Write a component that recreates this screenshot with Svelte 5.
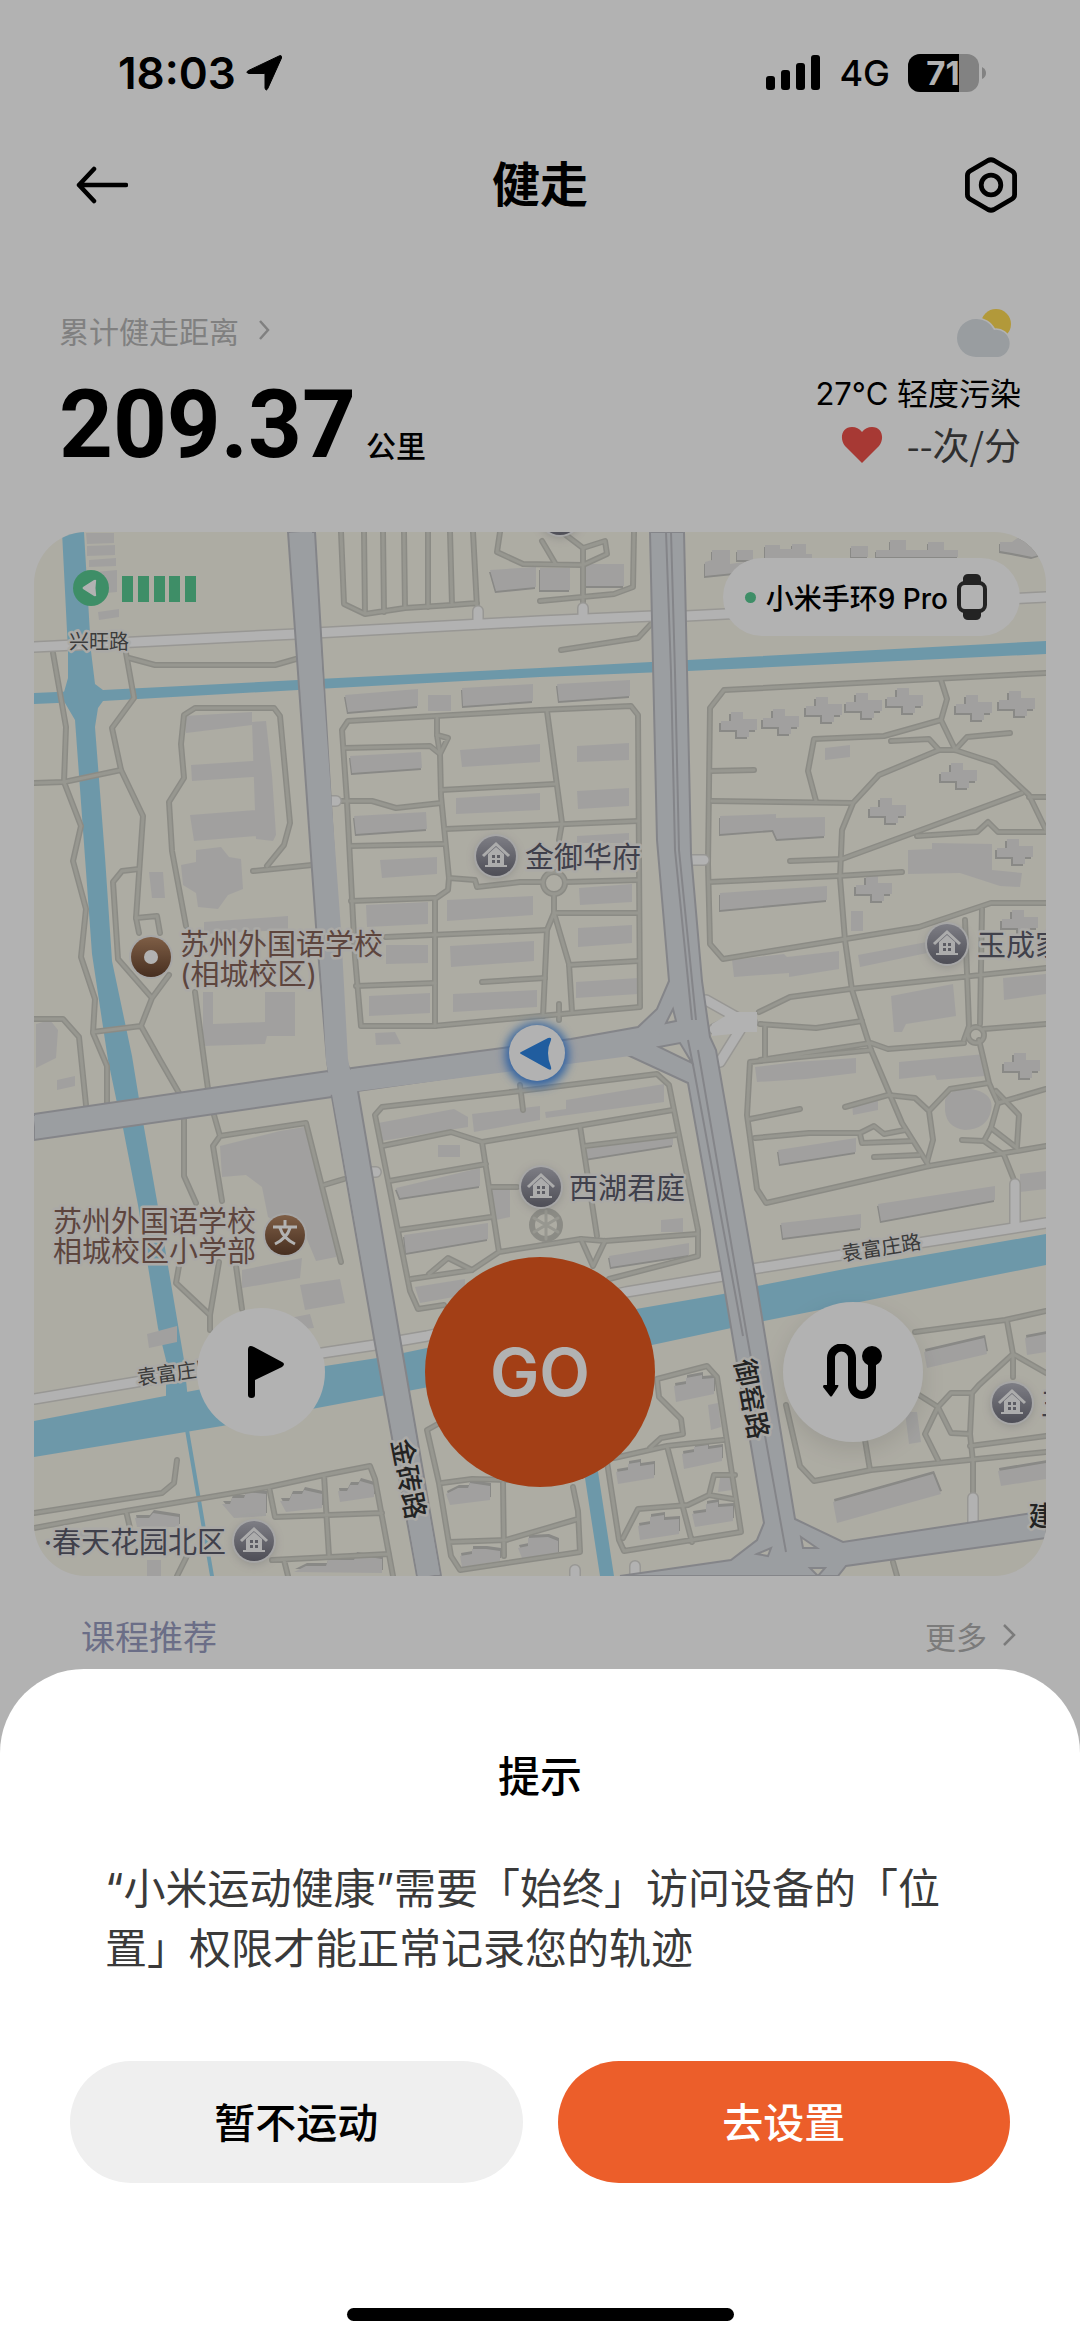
<script lang="ts">
    let sheetOpen = true;

    const closeSheet = () => {
        sheetOpen = false;
    };

    const steps = [122, 138, 154, 169, 185];

    // Footpaths and estate roads
    const lanes = [
        'M53 653L66 727 64 782 81 826 73 861 86 909 81 957 95 999 93 1033 107 1066V1103',
        'M126 653L134 698 112 728 121 770 143 816 136 918 139 933',
        'M34 783L64 782 121 770M129 658L155 665H275L296 659M136 918L157 916 160 933',
        'M139 869L122 871 113 882 118 959 152 998 141 1026 160 1060 179 1093M169 975L152 998M93 1032L141 1026',
        'M34 1019H63L79 1037 86 1105',
        'M186 926L172 851 169 802 184 778 181 744 184 715 195 708H274L280 716 290 823 284 845 267 866M253 871L312 865',
        'M195 992L204 1060 208 1089',
        'M341 532L344 604 365 614 405 608 452 605 477 603M364 532L365 614M383 532L384 612M404 532L405 608M428 532V607M450 532L452 605M473 532L477 608',
        'M500 532L497 552 523 564 583 565M542 541L555 563M562 532L583 548V603M583 548L605 541 607 554 583 565M634 532L633 587 614 594 540 601M561 650L638 638 652 623',
        'M540 710L348 721 342 730 347 802 355 957 361 1026 434 1026 540 1016 640 1007 638 715 631 706 540 710',
        'M437 718V735L440 754 441 796 449 878 448 890 435 899V1026M547 711L562 823 559 840M554 894V913L569 964 572 1012M554 913L547 930 543 1016',
        'M344 748L430 746 440 754M437 735L448 738 440 754M335 801H372L396 808 441 803M441 790L555 784M446 829L638 821M350 846L444 844',
        'M449 878L475 880 477 887 520 882 542 882M566 882L638 880M351 901L435 898M386 937L547 930M554 913H638M569 965L638 961M356 986L435 983M482 982L545 978M559 1004V1020',
        'M1046 673L724 690 710 708 708 864 710 944 723 959 919 927 991 903H1046M711 771L754 770M712 801L852 803',
        'M816 801L808 771 814 739 884 736 941 720 947 699 941 680M941 720L955 749M891 741L929 739 939 750M1010 733L967 737 955 750',
        'M1046 830L1029 795 995 763 955 750H939L879 775 853 803 842 830 840 878 845 940 852 990 871 1050 902 1123 929 1166',
        'M790 861L842 859 1022 793M1029 797H1046M917 836L977 832 988 822 998 832H1046M709 882L838 876 902 872',
        'M759 1012L790 997 850 989 1046 968M965 920L969 1026 964 1040M982 909L980 1024M984 1029L1046 1024M760 1024L816 1028 862 1021M765 1026V1060',
        'M871 1050L750 1062 747 1115 757 1189 766 1203 929 1166 1046 1146M760 1060L871 1043 888 1049 964 1043M979 1040L989 1083 998 1103 991 1128 1017 1148',
        'M750 1119L800 1109M755 1138L809 1133H860L874 1126 884 1134 905 1130M860 1134L862 1143 912 1141M874 1157L919 1155',
        'M845 1107L888 1095 915 1098 929 1111 933 1140 927 1162M929 1111L950 1089 988 1083M998 1103L1046 1089M996 1091L1019 1115 1017 1146M962 1140L984 1141 991 1128M984 1141L1004 1155 1014 1180',
        'M915 1332L1005 1320 1046 1311M1007 1321L1013 1354V1377M1046 1373L1013 1354 979 1385 972 1393H951L938 1407 919 1395M938 1407L951 1433 970 1434 972 1393M938 1407L925 1434 938 1460M970 1434L973 1462V1495M970 1446L1046 1436',
        'M786 1405L800 1466 814 1481 871 1470 1046 1452M865 1440L870 1470',
        'M657 1379L707 1366 717 1377 741 1532 624 1551 619 1540 607 1462M614 1458L667 1446 723 1440M667 1446L692 1542M657 1379L659 1397 681 1419 683 1434 661 1438 650 1448',
        'M623 1538L638 1509 688 1505 709 1495 733 1499M709 1495L714 1475H735',
        'M573 1487L578 1511 580 1552 460 1570 451 1556 439 1483 427 1430 445 1420M442 1483L472 1479 540 1481M503 1483L504 1556M449 1542L506 1540 578 1519',
        'M444 1305L418 1309 410 1291 375 1115 382 1107 520 1091 657 1074 669 1085 698 1230V1256L609 1279',
        'M382 1146L451 1132 482 1142 673 1110M482 1142L499 1252M389 1181L486 1164M489 1187H517M399 1230L491 1217M411 1279L472 1270 499 1252 581 1239 605 1241 697 1234',
        'M429 1274L448 1258 472 1270M580 1126L597 1236M585 1146L676 1135M581 1239L593 1266 605 1241M520 1085L523 1110',
        'M184 1119V1176L196 1203M214 1115L220 1136 306 1123 341 1262M220 1136L213 1146 222 1201M324 1185L344 1179M179 1266L176 1283 210 1315 219 1262M210 1315V1330M236 1266L242 1309',
        'M34 1513L162 1493 174 1483 177 1460M34 1528L126 1511 269 1487 324 1475 370 1466 375 1479 393 1576M324 1475L329 1556M269 1487L275 1517 382 1513M272 1560L389 1554M126 1511L130 1528M284 1560L288 1576M188 1554L177 1576M893 1562L897 1576'
    ];

    const buildings = [
        'M86 533h28v10l-27 1zM87 546l28-1v10l-28 1zM89 560l27-2v8l-27 1zM95 572l22-2v22l-22 2zM98 612l21-3v8l-20 3z',
        'M184 716l68-4v13l-66 8zM252 722l14-1 6 54 4 60-3 6-17-2-3-86zM191 765l76-5v16l-75 5zM190 815l80-6v26l-76 6z',
        'M196 850l25-3 8 10 12 2 2 30-15 6-10 14-20-2-2-14-13-8-2-20 15-3zM204 922l84-6v14l-84 4zM149 872h14l2 26h-13zM203 992h10v32l52-2v-30h30v44l-28 0-2 8-62 2z',
        'M460 750l80-6v18l-78 5zM456 798l84-5v17l-84 4zM380 860l57-3v17l-55 4zM366 905l62-3v22l-61 3zM447 900l86-4v19l-86 6zM386 945h42v18l-42 1zM450 946l84-5v20l-83 6z',
        'M369 996l61-3v20l-61 3zM453 994l84-4v17l-84 5zM375 1033l20-1 6 12-25 1zM577 746l52-3v17l-52 2zM577 791l52-3v18l-51 3zM579 888l53-4v18l-52 3zM578 928l54-3v18l-54 4zM576 982l62-4v16l-62 4zM577 836l52-3v10h-52zM428 695h23v16h-23z',
        'M825 748l25-3v12l-25 3zM908 850l24-1v-6l60 1v26l30 3-2 14-20-1-40-13-52 1zM851 911h12v20h-12zM732 960l52-6 3 3 52-6v18l-50 8v-4l-55 4zM858 955l74-14v11l-72 15zM891 996l62-12 3 32-50 8-4 8h-8zM1003 978l43-4v20l-42 6z',
        'M755 1067l40-5 61-4v15l-50 6-49 3zM899 1062l86-8v22l-48 4-2-5-36 4zM852 1102l26-6v14l-25 5zM945 1100q4-12 26-11 24 4 20 22-4 18-26 19-18-2-20-19zM1020 1174l26-3v18l-26 3zM905 1412h12l4 30-12 2z',
        'M378 1123l76-14 14 8v10l-86 14zM472 1114l68-8v14l-66 12zM438 1145h22v12h-22zM492 1190l18-3v30l-14 3zM415 1287l50-8v16l-45 8zM545 1112l21-3v-9l98-16v18l-118 16zM661 1220l22-2v14h-22z',
        'M220 1146l60-15 24-4 16 52 16 60v18l-20 4-10-24-14-4-24-16-6-30-16-12-24 2zM242 1270l60-12-2 20-58 10zM300 1285l40-6 5 24-40 7zM147 1334l30-8v16l-28 6zM36 1024l14-4 8 10-2 28-20 10zM57 1080l18-4v10l-18 4zM290 1318l20-4 4 14-22 2z',
        'M708 1405l10-2 3 24-10 3zM720 1478h12v12l-14 2zM60 1534l40-6v10l-40 4zM147 1560h14v16h-14z'
    ];

    // Taller blocks get a darker lower edge
    const blocks = [
        'M345 695l73-6v17l-70 6zM462 688l71-4v17l-70 5zM350 756l71-4 1 16-70 5zM354 816l72-4 1 17-71 5zM557 684l73-4v16l-71 5zM586 564h38v22h-38zM540 568h30v22h-30z',
        'M490 570l46-3v20l-40 4zM720 816l56-2v4l49-1v19l-48 3-4-9-53 4zM720 893l107-7v14l-107 10zM705 576v-14l7-2v-10h18v14l14-2v10z',
        'M737 550h16v10h-16zM765 559v-14h15v4h12v-5h14v10h6v5zM851 557v-11h17v11zM876 557v-7h14v-10h16v10h22v-8h16v8h14v7zM1000 542h12l8-6 12 6 10 12-10 3-20-4-12-2z',
        'M778 1150l78-12v14l-76 12zM781 1223l80-9v14l-78 10zM878 1204l117-18v14l-114 21zM396 1188l84-20v18l-80 12zM404 1235l84-12v16l-82 14zM585 1149l88-12v8l-88 14zM609 1256l80-13v12l-78 12z'
    ];

    const roofs = [
        'M924 1352l60-14 3 16-60 14zM1025 1338l21-4v18l-19 3zM833 1502l100-28 8 20-104 29zM998 1471l48-8v16l-45 7z',
        'M674 1386l12-2v-6l16-3v4l12-1v16l-38 8zM682 1454l12-2v-5l14-2v4l14-2v14l-38 8zM616 1472l12-2v-6l12-2v4l14-2v14l-36 6zM638 1526l12-2v-7l14-2v5l15-1v15l-39 6zM692 1514l14-2v-8l12-2v5l15-1v15l-38 6z',
        'M222 1504h8l2-6h12l2-6 20 2v22l-32 2zM280 1501h9l3-7h10l2-4 18 4v14l-36 4zM338 1491h9l3-6h8l2-4 14 4v12l-34 5zM135 1518h14l4-5 26 4v10h-42zM294 1572l12-6h20l2-6h26l2-5 26 4v14z',
        'M446 1494l12-6h10l2-5 20 3v14l-40 5zM460 1556l12-2v-5h14l14 2v10l-38 6zM518 1548l10-2v-8l20-1 10 4v14l-36 3z'
    ];

    const towers = [
        [739, 723], [781, 720], [824, 708], [864, 704], [905, 699], [974, 706], [1017, 702],
        [959, 774], [888, 809], [874, 887], [1015, 850], [1020, 921], [1022, 1064]
    ];

    const houses = [
        { x: 496, y: 856, name: '金御华府', tx: 525 },
        { x: 947, y: 944, name: '玉成家园', tx: 977 },
        { x: 541, y: 1187, name: '西湖君庭', tx: 569 },
        { x: 1012, y: 1403, name: '玉', tx: 1041 },
        { x: 254, y: 1541, name: '·春天花园北区', tx: 226, end: true },
        { x: 560, y: 515, name: '', tx: 0 }
    ];

    const avenueNames = [
        { x: 408, y: 1479, name: '金砖路' },
        { x: 751, y: 1399, name: '御窑路' }
    ];
</script>

<main>
    <div class="status">
        <div class="clock">
            <span>18:03</span>
            <svg width="36" height="36" viewBox="0 0 36 36"><path d="M33 1Q36-.5 35.500 3L22 33q-2 4-3 0V19.500q0-1-1-1L3 18.500q-4-1-.5-3z" stroke="#000" stroke-linejoin="round" /></svg>
        </div>
        <div class="signals">
            <svg width="55" height="36" viewBox="0 0 55 36">
                <rect x="0" y="21" width="9" height="14" rx="3" />
                <rect x="15" y="15" width="9" height="20" rx="3" />
                <rect x="30" y="8" width="9" height="27" rx="3" />
                <rect x="45" y="0" width="9" height="35" rx="3" />
            </svg>
            <span class="net">4G</span>
            <svg width="80" height="38" viewBox="0 0 80 38">
                <clipPath id="charge"><rect width="51" height="38" /></clipPath>
                <rect width="71" height="38" rx="12" fill="#bababa" />
                <rect width="71" height="38" rx="12" clip-path="url(#charge)" />
                <path d="M74 13q4 2 4 6t-4 6z" fill="#bababa" />
                <text class="level" x="35" y="31" clip-path="url(#charge)">71</text>
            </svg>
        </div>
    </div>

    <header>
        <button class="icon" aria-label="返回">
            <svg width="66" height="60" viewBox="-14 0 66 60"><path d="M50 30H3M18 14L3 30l15 16" fill="none" stroke="#000" stroke-width="4.500" stroke-linecap="round" stroke-linejoin="round" /></svg>
        </button>
        <h1>健走</h1>
        <button class="icon" aria-label="设置">
            <svg width="54" height="60" viewBox="0 0 54 60" fill="none" stroke="#000" stroke-width="4.800">
                <path d="M24 5.500q3-1.500 6 0l18 10.500q2.600 1.600 2.600 4.500v19q0 3-2.600 4.500L30 54.500q-3 1.500-6 0L6 44q-2.600-1.500-2.600-4.500v-19Q3.400 17.500 6 16z" stroke-linejoin="round" />
                <circle cx="27" cy="30" r="9.800" />
            </svg>
        </button>
    </header>

    <section class="stats">
        <div>
            <a class="total" href="#history">
                累计健走距离
                <svg width="14" height="24" viewBox="0 0 14 24"><path d="M3 3l8 9-8 9" fill="none" stroke="currentColor" stroke-width="2.500" /></svg>
            </a>
            <p class="distance"><strong>209.37</strong><span>公里</span></p>
        </div>
        <div class="weather">
            <svg class="sky" width="56" height="50" viewBox="0 0 56 50">
                <circle cx="39" cy="16" r="15" fill="#ffdb54" />
                <path d="M19 11a19 19 0 0 1 18 11 13.500 13.500 0 1 1 4 27H19a19 19 0 0 1 0-38z" fill="#dbe1e6" stroke="#fff" stroke-width="3" paint-order="stroke" />
            </svg>
            <p>27°C 轻度污染</p>
            <p class="pulse">
                <svg width="42" height="38" viewBox="0 0 42 38"><path d="M21 37L4 20C-2 12 1 1 11 1q6 0 10 5 4-5 10-5c10 0 13 11 7 19z" fill="#f0524b" /></svg>
                --次/分
            </p>
        </div>
    </section>

    <section class="map">
        <svg class="plan" viewBox="34 532 1012 1044">
            <defs>
                <linearGradient id="slate" x2="0" y2="1"><stop stop-color="#b4b4be" /><stop offset="1" stop-color="#70707c" /></linearGradient>
                <linearGradient id="bronze" x2="0" y2="1"><stop stop-color="#b58764" /><stop offset="1" stop-color="#66432e" /></linearGradient>
                <filter id="glow" x="-50%" y="-50%" width="200%" height="200%"><feGaussianBlur stdDeviation="5" /></filter>
                <g id="tower">
                    <path class="edge" d="M-18-2h10v-9h12v7h14v11h-8v7h-12v-7h-16z" transform="translate(-2 2)" />
                    <path class="building" d="M-18-2h10v-9h12v7h14v11h-8v7h-12v-7h-16z" />
                </g>
                <g id="house">
                    <circle r="21" cy="2" fill="#999" opacity=".4" filter="url(#glow)" />
                    <circle r="22" fill="#eee" />
                    <circle r="20" fill="url(#slate)" />
                    <path d="M-13 0L0-12 13 0" fill="none" stroke="#f6f6f6" stroke-width="3" />
                    <path d="M-8-2L0-9l8 7V9h3v2h-22V9h3z" fill="#f6f6f6" />
                    <path d="M-4-1h3v3h-3zM1-1h3v3H1zM-4 4h3v3h-3zM1 4h3v3H1z" fill="#85858f" />
                </g>
            </defs>

            <rect x="34" y="532" width="1012" height="1044" fill="#f8f6ea" />

            <g class="water">
                <path d="M62 532H84L91 651 95 684 103 690V701L98 708 95 727 105 857 112 961 132 1056 139 1099 157 1201 184 1360 188 1400H166V1360L158 1328 138 1205 123 1128 117 1103 108 1060 92 954 79 775 75 720 65 703 64 692 68 678V651z" />
                <path d="M34 693L103 690 298 680 540 668 688 660 1046 641V654L688 671 540 677 298 690 103 701 34 704z" />
                <path d="M34 1421L165 1396 325 1366 384 1357 427 1348 636 1309 723 1294 757 1286 850 1268 1046 1234V1265L764 1321 652 1345 317 1408 222 1426 34 1457z" />
                <path d="M185 1430h4l25 146h-4zM583 1465h14l17 111h-14z" />
            </g>

            {#each blocks as d}
                <path class="edge" {d} transform="translate(-1 2)" />
            {/each}
            {#each roofs as d}
                <path class="edge" {d} transform="translate(1 -3)" />
            {/each}
            {#each [...buildings, ...blocks, ...roofs] as d}
                <path class="building" {d} />
            {/each}
            {#each towers as [x, y]}
                <use href="#tower" {x} {y} />
            {/each}

            <g class="lane-case">
                {#each lanes as d}<path {d} />{/each}
                <circle cx="554" cy="883" r="11" />
                <circle cx="976" cy="1035" r="8" />
                <circle cx="546" cy="1225" r="14" />
            </g>
            <g class="lane">
                {#each lanes as d}<path {d} />{/each}
                <circle cx="554" cy="883" r="11" />
                <circle cx="976" cy="1035" r="8" />
                <path d="M534 1218l24 14M546 1211v28M558 1218l-24 14" />
            </g>

            {#each ['street-case', 'street'] as layer}
                <g class={layer}>
                    <path d="M34 647L296 634 540 621 653 616 686 616 1046 597M34 1399L196 1372 375 1345 427 1336 626 1292 723 1276 752 1269 1046 1223" />
                    <path d="M478 624V611M583 618V608M325 801h11M690 860h14M366 1172h10M1015 1184v42M973 1498v30M635 1566v14M575 1570v12" />
                    <path d="M706 1000L738 1018 714 1029M740 1022h12M740 1030L720 1062" />
                </g>
            {/each}
            <path class="plaza" d="M712 1024L732 1012H757V1032H742L732 1034 712 1036z" />

            <g class="avenue">
                <path d="M34 1114L328 1071 352 1068 571 1039 638 1027 657 1009 669 981 657 840 650 532H684L691 854 702 981 710 1037 716 1050 757 1287 795 1519 843 1542 1046 1511V1538L846 1566 838 1576H620L731 1560 757 1540 764 1523 722 1274 688 1083 621 1052 574 1060 357 1091 332 1097 34 1140z" />
                <path d="M288 532H315L346 1060 358 1091 399 1332 441 1576H417L375 1344 332 1097 327 1060 316 926z" />
            </g>
            <path d="M35 1127L342 1082 660 1041M301 532L330 930 337 1060 387 1338 429 1576" class="surface" />
            <g class="divider">
                <path d="M666 532L671 672 675 850 692 1020M671 532L675 672 679 850 696 1020M698 1050L747 1336 786 1552M688 1040L694 1070 743 1336" />
            </g>
            <path class="island" d="M673 1009L676 1021 666 1023zM659 1047L680 1043 692 1063zM801 1537L817 1548H803zM757 1554l14-6-3 8zM810 1568h15l-7 8z" />

            <g class="street-name">
                <text x="69" y="649">兴旺路</text>
                <text x="138" y="1385" transform="rotate(-8 138 1385)">袁富庄路</text>
                <text x="843" y="1261" transform="rotate(-9 843 1261)">袁富庄路</text>
            </g>
            <g class="avenue-name">
                {#each avenueNames as road}
                    <text x={road.x} y={road.y + 9} transform="rotate(79 {road.x} {road.y})">{road.name}</text>
                {/each}
                <text x="1042" y="1526">建</text>
            </g>

            {#each houses as house}
                <use href="#house" x={house.x} y={house.y} />
                <text class="place" class:end={house.end} x={house.tx} y={house.y + 12}>{house.name}</text>
            {/each}

            <circle cx="151" cy="957" r="22" fill="#eee" />
            <circle cx="151" cy="957" r="20" fill="url(#bronze)" />
            <circle cx="151" cy="957" r="7" fill="#fff" />
            <text class="school" x="180" y="955">苏州外国语学校</text>
            <text class="school" x="180" y="985">(相城校区)</text>

            <circle cx="285" cy="1235" r="22" fill="#eee" />
            <circle cx="285" cy="1235" r="20" fill="url(#bronze)" />
            <path d="M273 1227h24M285 1220v7M280 1228q3 10 15 16M290 1228q-3 10-15 16" fill="none" stroke="#fff" stroke-width="3" />
            <text class="school" x="53" y="1232">苏州外国语学校</text>
            <text class="school" x="53" y="1262">相城校区小学部</text>

            <circle cx="537" cy="1055" r="32" fill="#4a8fe8" filter="url(#glow)" />
            <circle cx="537" cy="1053" r="28" fill="#fff" />
            <path d="M521 1054q-2-1 0-2l27-14q4-1 3 2-6 13 0 27 1 4-3 2z" fill="#2f86e4" />

            <circle cx="91" cy="588" r="18" fill="#5acc94" />
            <path d="M83 589q-1-1 0-2l11-7q3-1 2 2-1 6 0 12 1 3-2 2z" fill="#fff" />
            {#each steps as x}
                <rect {x} y="576" width="11" height="26" fill="#5acc94" />
            {/each}
        </svg>

        <button class="device">
            <i></i>
            小米手环9 Pro
            <svg width="32" height="46" viewBox="0 0 32 46">
                <path d="M7 4q1-4 5-4h8q4 0 5 4v5H7zM7 37h18v5q-1 4-5 4h-8q-4 0-5-4z" fill="#333" />
                <rect x="3" y="9" width="26" height="28" rx="6" fill="#fff" stroke="#333" stroke-width="4" />
            </svg>
        </button>

        <div class="actions">
            <button class="round flag" aria-label="目标">
                <svg width="48" height="54" viewBox="-10 0 48 54"><path d="M1 5q0-6 6-3l28 15q4 2 0 5L8 35v15q0 3-3.500 3T1 50z" /></svg>
            </button>
            <button class="go">GO</button>
            <button class="round route" aria-label="路线">
                <svg width="60" height="56" viewBox="0 0 60 56">
                    <path d="M8 44V14a10 10 0 0 1 21 0V41a10 10 0 0 0 20 0V14" fill="none" stroke="#000" stroke-width="8" />
                    <circle cx="49" cy="12" r="10" />
                    <path d="M1 41h14q1 0 0 2l-6 9q-1 1-2 0L0 43q0-2 1-2z" />
                </svg>
            </button>
        </div>
    </section>

    <section class="courses">
        <h2>课程推荐</h2>
        <a href="#courses">
            更多
            <svg width="16" height="26" viewBox="0 0 16 26"><path d="M3 3l10 10L3 23" fill="none" stroke="currentColor" stroke-width="2.500" /></svg>
        </a>
    </section>
</main>

{#if sheetOpen}
    <div class="backdrop">
        <div class="sheet" role="dialog" aria-labelledby="sheet-title">
            <h2 id="sheet-title">提示</h2>
            <p>“小米运动健康”需要「始终」访问设备的「位置」权限才能正常记录您的轨迹</p>
            <div class="buttons">
                <button on:click={closeSheet}>暂不运动</button>
                <button class="primary" on:click={closeSheet}>去设置</button>
            </div>
            <div class="home"></div>
        </div>
    </div>
{/if}

<style>
    :global(body) {
        background: #fff;
        font-family: Inter, "Noto Sans CJK SC", sans-serif;
        color: #000;
    }

    h1, h2, p {
        margin: 0;
    }

    button {
        font: inherit;
        color: inherit;
        border: none;
        padding: 0;
        background: none;
        cursor: pointer;
    }

    a {
        color: inherit;
        text-decoration: none;
    }

    svg {
        display: block;
    }

    main {
        overflow: hidden;
    }

    .status {
        display: flex;
        justify-content: space-between;
        align-items: center;
        height: 60px;
        padding: 43px 92px 0 118px;
    }

    .clock, .signals {
        display: flex;
        align-items: center;
    }

    .clock {
        gap: 10px;
        font-size: 44px;
        font-weight: 600;
    }

    .signals {
        gap: 18px;
    }

    .net {
        font-size: 36px;
        font-weight: 500;
    }

    .level {
        font-size: 33px;
        font-weight: 700;
        text-anchor: middle;
        fill: #fff;
    }

    header {
        display: grid;
        grid-template-columns: 1fr auto 1fr;
        align-items: center;
        height: 80px;
        padding: 42px 62px 0;
    }

    .icon:last-child {
        justify-self: end;
    }

    .icon:first-child {
        justify-self: start;
    }

    h1 {
        font-size: 48px;
        font-weight: 700;
        line-height: 60px;
    }

    .stats {
        display: flex;
        justify-content: space-between;
        align-items: flex-start;
        padding: 83px 59px 0;
        height: 224px;
    }

    .total {
        display: flex;
        align-items: center;
        gap: 18px;
        height: 44px;
        font-size: 30px;
        color: #b8b8b8;
    }

    .distance {
        display: flex;
        align-items: baseline;
        gap: 10px;
        margin-top: 18px;
        line-height: 110px;
    }

    .distance strong {
        font-family: Roboto, sans-serif;
        font-size: 94px;
        font-weight: 700;
    }

    .distance span {
        font-size: 30px;
        font-weight: 500;
    }

    .weather {
        display: flex;
        flex-direction: column;
        align-items: flex-end;
        font-size: 31px;
        line-height: 51px;
    }

    .sky {
        margin: 0 8px 10px 0;
    }

    .pulse {
        display: flex;
        align-items: center;
        gap: 24px;
        font-family: "Noto Sans CJK SC", sans-serif;
        font-size: 37px;
        color: #444;
    }

    .map {
        position: relative;
        margin: 0 34px;
        border-radius: 52px;
        overflow: hidden;
    }

    .plan {
        width: 100%;
    }

    .water {
        fill: #9ddaf2;
    }

    .building {
        fill: #e7e6e4;
    }

    .edge {
        fill: #c4c4c0;
    }

    .lane-case, .lane, .street-case, .street {
        fill: none;
        stroke-linecap: round;
        stroke-linejoin: round;
    }

    .lane-case {
        stroke: #c8c8bf;
        stroke-width: 6;
    }

    .lane {
        stroke: #d8d8ce;
        stroke-width: 3;
    }

    .street-case {
        stroke: #dad9d4;
        stroke-width: 12;
    }

    .street {
        stroke: #fff;
        stroke-width: 9;
    }

    .plaza {
        fill: #fff;
    }

    .avenue {
        fill: #dfe2e7;
        stroke: #bebfc4;
        stroke-width: 2;
    }

    .surface {
        fill: none;
        stroke: #dfe2e7;
        stroke-width: 22;
    }

    .divider {
        fill: none;
        stroke: #bebfc4;
        stroke-width: 2;
    }

    .island {
        fill: #f8f6ea;
        stroke: #bebfc4;
        stroke-width: 2;
    }

    .plan text {
        paint-order: stroke;
        stroke: #f4f3ee;
        stroke-width: 5;
        stroke-linejoin: round;
    }

    .street-name text {
        font-size: 20px;
        fill: #555;
    }

    .avenue-name text {
        font-size: 27px;
        font-weight: 500;
        text-anchor: middle;
        fill: #333;
    }

    .plan .place {
        font-size: 29px;
        fill: #5c5c6c;
    }

    .plan .end {
        text-anchor: end;
    }

    .plan .school {
        font-size: 29px;
        fill: #866459;
    }

    .device {
        position: absolute;
        top: 26px;
        right: 26px;
        display: flex;
        align-items: center;
        gap: 8px;
        height: 78px;
        padding: 0 32px 0 22px;
        border-radius: 39px;
        background: #fff;
        font-size: 28px;
        font-weight: 500;
    }

    .device i {
        width: 11px;
        height: 11px;
        margin-right: 2px;
        border-radius: 50%;
        background: #5acc94;
    }

    .actions {
        position: absolute;
        left: 0;
        right: 0;
        bottom: 89px;
        display: grid;
        grid-template-columns: 1fr auto 1fr;
        align-items: center;
    }

    .round {
        display: flex;
        align-items: center;
        justify-content: center;
        border-radius: 50%;
        background: #fff;
    }

    .flag {
        justify-self: end;
        width: 128px;
        height: 128px;
        margin-right: 100px;
    }

    .route {
        width: 140px;
        height: 140px;
        margin-left: 128px;
        box-shadow: 0 8px 24px rgba(0, 0, 0, 0.1);
    }

    .go {
        width: 230px;
        height: 230px;
        border-radius: 50%;
        background: #ea5b20;
        color: #fff;
        font-size: 66px;
        font-weight: 600;
    }

    .courses {
        display: flex;
        justify-content: space-between;
        align-items: center;
        height: 118px;
        padding: 0 63px 0 81px;
    }

    .courses h2 {
        font-size: 34px;
        font-weight: 400;
        color: #9a9ec2;
    }

    .courses a {
        display: flex;
        align-items: center;
        gap: 14px;
        font-size: 31px;
        color: #b0b0b0;
    }

    .backdrop {
        position: fixed;
        inset: 0;
        display: flex;
        flex-direction: column;
        justify-content: flex-end;
        background: rgba(0, 0, 0, 0.3);
    }

    .sheet {
        padding: 78px 70px 20px;
        border-radius: 84px 84px 0 0;
        background: #fff;
        text-align: center;
    }

    .sheet h2 {
        font-size: 42px;
        font-weight: 500;
        line-height: 60px;
    }

    .sheet p {
        margin: 52px 0 82px;
        padding: 0 35px;
        text-align: left;
        font-size: 42px;
        line-height: 60px;
        color: #3a3a3a;
    }

    .buttons {
        display: grid;
        grid-template-columns: 1fr 1fr;
        gap: 35px;
    }

    .buttons button {
        height: 122px;
        padding-bottom: 4px;
        border-radius: 61px;
        background: #efefef;
        font-size: 41px;
        font-weight: 500;
    }

    .buttons .primary {
        background: #ec5e2a;
        color: #fff;
    }

    .home {
        width: 387px;
        height: 13px;
        margin: 125px auto 0;
        border-radius: 7px;
        background: #000;
    }
</style>
